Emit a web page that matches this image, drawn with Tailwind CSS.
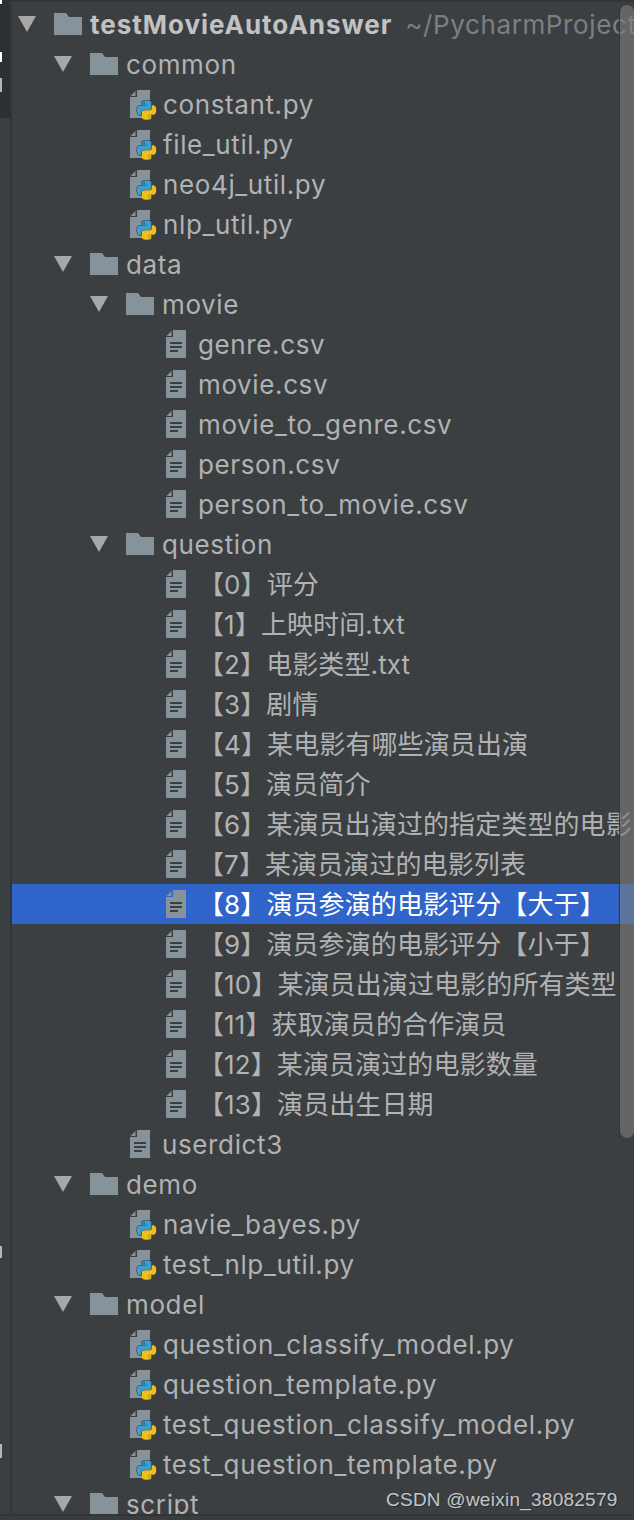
<!DOCTYPE html>
<html lang="en">
<head>
  <meta charset="UTF-8">
  <meta name="viewport" content="width=device-width, initial-scale=1.0">
  <title>Project tree</title>
  <script src="https://cdn.jsdelivr.net/npm/@tailwindcss/browser@4"></script>
</head>
<body class="bg-[#3c3f41] overflow-hidden">
  <!-- shared icons -->
  <svg class="hidden">
    <symbol id="arrow" viewBox="0 0 18 16"><path d="M0 0H18L9 16Z" fill="#a8a8a8"/></symbol>
    <symbol id="folder" viewBox="0 0 28 22"><path d="M0 0H12L15 4H28V22H0Z" fill="#87939a"/></symbol>
    <symbol id="py" viewBox="0 0 28 30">
      <path d="M7 0H20V28H0V7H7Z" fill="#87939a"/>
      <path d="M5.500 1V6H0.500Z" fill="#87939a"/>
      <g transform="translate(7 10.500) scale(0.8)">
        <path d="M14.25.18l.9.2.73.26.59.3.45.32.34.34.25.34.16.33.1.3.04.26.02.2-.01.13V8.5l-.05.63-.13.55-.21.46-.26.38-.3.31-.33.25-.35.19-.35.14-.33.1-.3.07-.26.04-.21.02H8.77l-.69.05-.59.14-.5.22-.41.27-.33.32-.27.35-.2.36-.15.37-.1.35-.07.32-.04.27-.02.21v3.06H3.17l-.21-.03-.28-.07-.32-.12-.35-.18-.36-.26-.36-.36-.35-.46-.32-.59-.28-.73-.21-.88-.14-1.05-.05-1.23.06-1.22.16-1.04.24-.87.32-.71.36-.57.4-.44.42-.33.42-.24.4-.16.36-.1.32-.05.24-.01h.16l.06.01h8.16v-.83H6.18l-.01-2.75-.02-.37.05-.34.11-.31.17-.28.25-.26.31-.23.38-.2.44-.18.51-.15.58-.12.64-.1.71-.06.77-.04.84-.02 1.27.05zm-6.3 1.98l-.23.33-.08.41.08.41.23.34.33.22.41.09.41-.09.33-.22.23-.34.08-.41-.08-.41-.23-.33-.33-.22-.41-.09-.41.09z" fill="#3d9fd0" stroke="#2f4350" stroke-width="1.500" paint-order="stroke"/>
        <path d="M21.040 6.110l.28.06.32.12.35.18.36.27.36.35.35.47.32.59.28.73.21.88.14 1.04.05 1.23-.06 1.23-.16 1.04-.24.86-.32.71-.36.57-.4.45-.42.33-.42.24-.4.16-.36.09-.32.05-.24.02-.16-.01h-8.22v.82h5.84l.01 2.76.02.36-.05.34-.11.31-.17.29-.25.25-.31.24-.38.2-.44.17-.51.15-.58.13-.64.09-.71.07-.77.04-.84.01-1.27-.04-1.07-.14-.9-.2-.73-.25-.59-.3-.45-.33-.34-.34-.25-.34-.16-.33-.1-.3-.04-.25-.02-.2.01-.13v-5.34l.05-.64.13-.54.21-.46.26-.38.3-.32.33-.24.35-.2.35-.14.33-.1.3-.06.26-.04.21-.02.13-.01h5.84l.69-.05.59-.14.5-.21.41-.28.33-.32.27-.35.2-.36.15-.36.1-.35.07-.32.04-.28.02-.21V6.070h2.090l.14.01zm-6.470 14.250l-.23.33-.08.41.08.41.23.33.33.23.41.08.41-.08.33-.23.23-.33.08-.41-.08-.41-.23-.33-.33-.23-.41-.08-.41.08z" fill="#f0bf1a"/>
      </g>
    </symbol>
    <symbol id="txt" viewBox="0 0 20 28">
      <path d="M7 0H20V28H0V7H7Z" fill="#87939a"/>
      <path d="M5.500 1V6H0.500Z" fill="#87939a"/>
      <path d="M4 12H16V14H4ZM4 16H16V18H4ZM4 20H12V22H4Z" fill="#3c3f41"/>
    </symbol>
  </svg>

  <div class="relative h-[1520px] w-[634px] overflow-hidden text-[26px] leading-[40px] tracking-[0.62px] text-[#b0b2b3] font-['Inter','Noto_Sans_CJK_SC',sans-serif]">
    <!-- top edge -->
    <div class="h-[2px] bg-[#323436]"></div>

    <div class="flex pt-[2px]">
      <!-- left gutter of the tool window -->
      <div class="w-[12px] shrink-0 border-r-2 border-[#323436]"></div>

      <div class="h-[1510px] min-w-0 flex-1 overflow-hidden whitespace-nowrap [&_span]:pt-[2px]">
        <div class="flex h-[40px] items-center pl-[6px]">
          <svg class="h-[16px] w-[18px] shrink-0"><use href="#arrow"/></svg>
          <svg class="ml-[18px] h-[22px] w-[28px] shrink-0"><use href="#folder"/></svg>
          <span class="ml-[8px] shrink-0 font-bold text-[#c0c2c3] tracking-[0.97px]">testMovieAutoAnswer</span>
          <span class="ml-[13px] shrink-0 text-[#7c7f81]">~/PycharmProjects</span>
        </div>

        <div class="flex h-[40px] items-center pl-[42px]"><svg class="h-[16px] w-[18px]"><use href="#arrow"/></svg><svg class="ml-[18px] h-[22px] w-[28px]"><use href="#folder"/></svg><span class="ml-[8px]">common</span></div>
        <div class="flex h-[40px] items-center pl-[118px]"><svg class="mt-[2px] h-[30px] w-[28px]"><use href="#py"/></svg><span class="ml-[5px]">constant.py</span></div>
        <div class="flex h-[40px] items-center pl-[118px]"><svg class="mt-[2px] h-[30px] w-[28px]"><use href="#py"/></svg><span class="ml-[5px]">file_util.py</span></div>
        <div class="flex h-[40px] items-center pl-[118px]"><svg class="mt-[2px] h-[30px] w-[28px]"><use href="#py"/></svg><span class="ml-[5px]">neo4j_util.py</span></div>
        <div class="flex h-[40px] items-center pl-[118px]"><svg class="mt-[2px] h-[30px] w-[28px]"><use href="#py"/></svg><span class="ml-[5px]">nlp_util.py</span></div>

        <div class="flex h-[40px] items-center pl-[42px]"><svg class="h-[16px] w-[18px]"><use href="#arrow"/></svg><svg class="ml-[18px] h-[22px] w-[28px]"><use href="#folder"/></svg><span class="ml-[8px]">data</span></div>
        <div class="flex h-[40px] items-center pl-[78px]"><svg class="h-[16px] w-[18px]"><use href="#arrow"/></svg><svg class="ml-[18px] h-[22px] w-[28px]"><use href="#folder"/></svg><span class="ml-[8px]">movie</span></div>
        <div class="flex h-[40px] items-center pl-[154px]"><svg class="h-[28px] w-[20px]"><use href="#txt"/></svg><span class="ml-[12px]">genre.csv</span></div>
        <div class="flex h-[40px] items-center pl-[154px]"><svg class="h-[28px] w-[20px]"><use href="#txt"/></svg><span class="ml-[12px]">movie.csv</span></div>
        <div class="flex h-[40px] items-center pl-[154px]"><svg class="h-[28px] w-[20px]"><use href="#txt"/></svg><span class="ml-[12px]">movie_to_genre.csv</span></div>
        <div class="flex h-[40px] items-center pl-[154px]"><svg class="h-[28px] w-[20px]"><use href="#txt"/></svg><span class="ml-[12px]">person.csv</span></div>
        <div class="flex h-[40px] items-center pl-[154px]"><svg class="h-[28px] w-[20px]"><use href="#txt"/></svg><span class="ml-[12px]">person_to_movie.csv</span></div>

        <div class="flex h-[40px] items-center pl-[78px]"><svg class="h-[16px] w-[18px]"><use href="#arrow"/></svg><svg class="ml-[18px] h-[22px] w-[28px]"><use href="#folder"/></svg><span class="ml-[8px]">question</span></div>
        <div class="flex h-[40px] items-center pl-[154px]"><svg class="h-[28px] w-[20px]"><use href="#txt"/></svg><span class="ml-[12px] tracking-[0.1px]">【0】评分</span></div>
        <div class="flex h-[40px] items-center pl-[154px]"><svg class="h-[28px] w-[20px]"><use href="#txt"/></svg><span class="ml-[12px] tracking-[0.1px]">【1】上映时间.txt</span></div>
        <div class="flex h-[40px] items-center pl-[154px]"><svg class="h-[28px] w-[20px]"><use href="#txt"/></svg><span class="ml-[12px] tracking-[0.1px]">【2】电影类型.txt</span></div>
        <div class="flex h-[40px] items-center pl-[154px]"><svg class="h-[28px] w-[20px]"><use href="#txt"/></svg><span class="ml-[12px] tracking-[0.1px]">【3】剧情</span></div>
        <div class="flex h-[40px] items-center pl-[154px]"><svg class="h-[28px] w-[20px]"><use href="#txt"/></svg><span class="ml-[12px] tracking-[0.1px]">【4】某电影有哪些演员出演</span></div>
        <div class="flex h-[40px] items-center pl-[154px]"><svg class="h-[28px] w-[20px]"><use href="#txt"/></svg><span class="ml-[12px] tracking-[0.1px]">【5】演员简介</span></div>
        <div class="flex h-[40px] items-center pl-[154px]"><svg class="h-[28px] w-[20px]"><use href="#txt"/></svg><span class="ml-[12px] tracking-[0.1px]">【6】某演员出演过的指定类型的电影</span></div>
        <div class="flex h-[40px] items-center pl-[154px]"><svg class="h-[28px] w-[20px]"><use href="#txt"/></svg><span class="ml-[12px] tracking-[0.1px]">【7】某演员演过的电影列表</span></div>
        <div class="flex h-[40px] items-center bg-[#2f65ca] pl-[154px] text-white"><svg class="h-[28px] w-[20px]"><use href="#txt"/></svg><span class="ml-[12px] tracking-[0.1px]">【8】演员参演的电影评分【大于】</span></div>
        <div class="flex h-[40px] items-center pl-[154px]"><svg class="h-[28px] w-[20px]"><use href="#txt"/></svg><span class="ml-[12px] tracking-[0.1px]">【9】演员参演的电影评分【小于】</span></div>
        <div class="flex h-[40px] items-center pl-[154px]"><svg class="h-[28px] w-[20px]"><use href="#txt"/></svg><span class="ml-[12px] tracking-[0.1px]">【10】某演员出演过电影的所有类型</span></div>
        <div class="flex h-[40px] items-center pl-[154px]"><svg class="h-[28px] w-[20px]"><use href="#txt"/></svg><span class="ml-[12px] tracking-[0.1px]">【11】获取演员的合作演员</span></div>
        <div class="flex h-[40px] items-center pl-[154px]"><svg class="h-[28px] w-[20px]"><use href="#txt"/></svg><span class="ml-[12px] tracking-[0.1px]">【12】某演员演过的电影数量</span></div>
        <div class="flex h-[40px] items-center pl-[154px]"><svg class="h-[28px] w-[20px]"><use href="#txt"/></svg><span class="ml-[12px] tracking-[0.1px]">【13】演员出生日期</span></div>
        <div class="flex h-[40px] items-center pl-[118px]"><svg class="h-[28px] w-[20px]"><use href="#txt"/></svg><span class="ml-[12px]">userdict3</span></div>

        <div class="flex h-[40px] items-center pl-[42px]"><svg class="h-[16px] w-[18px]"><use href="#arrow"/></svg><svg class="ml-[18px] h-[22px] w-[28px]"><use href="#folder"/></svg><span class="ml-[8px]">demo</span></div>
        <div class="flex h-[40px] items-center pl-[118px]"><svg class="mt-[2px] h-[30px] w-[28px]"><use href="#py"/></svg><span class="ml-[5px]">navie_bayes.py</span></div>
        <div class="flex h-[40px] items-center pl-[118px]"><svg class="mt-[2px] h-[30px] w-[28px]"><use href="#py"/></svg><span class="ml-[5px]">test_nlp_util.py</span></div>

        <div class="flex h-[40px] items-center pl-[42px]"><svg class="h-[16px] w-[18px]"><use href="#arrow"/></svg><svg class="ml-[18px] h-[22px] w-[28px]"><use href="#folder"/></svg><span class="ml-[8px]">model</span></div>
        <div class="flex h-[40px] items-center pl-[118px]"><svg class="mt-[2px] h-[30px] w-[28px]"><use href="#py"/></svg><span class="ml-[5px]">question_classify_model.py</span></div>
        <div class="flex h-[40px] items-center pl-[118px]"><svg class="mt-[2px] h-[30px] w-[28px]"><use href="#py"/></svg><span class="ml-[5px]">question_template.py</span></div>
        <div class="flex h-[40px] items-center pl-[118px]"><svg class="mt-[2px] h-[30px] w-[28px]"><use href="#py"/></svg><span class="ml-[5px]">test_question_classify_model.py</span></div>
        <div class="flex h-[40px] items-center pl-[118px]"><svg class="mt-[2px] h-[30px] w-[28px]"><use href="#py"/></svg><span class="ml-[5px]">test_question_template.py</span></div>

        <div class="flex h-[40px] items-center pl-[42px]"><svg class="h-[16px] w-[18px]"><use href="#arrow"/></svg><svg class="ml-[18px] h-[22px] w-[28px]"><use href="#folder"/></svg><span class="ml-[8px]">script</span></div>
      </div>
    </div>

    <!-- bits of the window behind, showing in the gutter -->
    <div class="absolute left-0 top-0 h-[118px] w-[10px] bg-[#2d2f31]"></div>
    <div class="absolute left-0 top-0 h-[4px] w-[2px] bg-white"></div>
    <div class="absolute left-0 top-[52px] h-[10px] w-[2px] bg-white"></div>
    <div class="absolute left-0 top-[78px] h-[14px] w-[2px] bg-[#b5b5b5]"></div>
    <div class="absolute left-0 top-[1246px] h-[12px] w-[2px] bg-[#b5b5b5]"></div>
    <div class="absolute left-0 top-[1444px] h-[14px] w-[2px] bg-[#b5b5b5]"></div>

    <!-- bottom edge -->
    <div class="absolute bottom-0 left-0 h-[6px] w-full border-t-2 border-[#323436] bg-[#3a3d3f]"></div>
    <!-- scrollbar thumb -->
    <div class="absolute left-[620px] top-[5px] h-[1133px] w-[14px] rounded-[7px] bg-[#7d7f81]/60 shadow-[-1px_0_1px_#333537]"></div>
    <!-- watermark -->
    <div class="absolute left-[386px] top-[1490px] text-[19px] leading-[20px] tracking-[0.25px] text-[#c4c6c7] [text-shadow:1px_1px_0_#2a2c2e] font-['Liberation_Sans',sans-serif]">CSDN @weixin_38082579</div>
  </div>
</body>
</html>
